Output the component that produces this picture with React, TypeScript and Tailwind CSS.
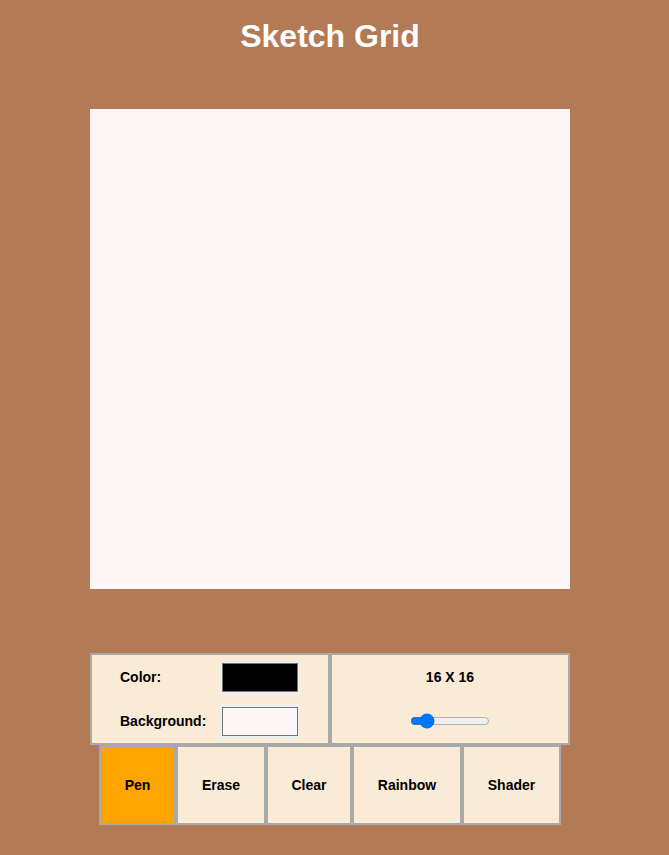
import React from "react";

const font = { fontFamily: '"Liberation Sans", Arial, sans-serif' };

function Swatch({ color }: { color: string }) {
  return (
    <div className="w-[80px] h-[35px] bg-[#efefef] flex items-center justify-center">
      <div className="w-[76px] h-[29px] border border-[#767676]" style={{ backgroundColor: color }} />
    </div>
  );
}

const buttons = [
  { label: "Pen", w: "w-[77px]", bg: "bg-[#ffa500]" },
  { label: "Erase", w: "w-[90px]", bg: "bg-[#faebd7]" },
  { label: "Clear", w: "w-[86px]", bg: "bg-[#faebd7]" },
  { label: "Rainbow", w: "w-[110px]", bg: "bg-[#faebd7]" },
  { label: "Shader", w: "w-[99px]", bg: "bg-[#faebd7]" },
];

export default function App() {
  return (
    <div className="min-h-[855px] w-full bg-[#b37a56]" style={font}>
      <div className="w-[660px] flex flex-col items-center">
        <h1 className="pt-[18px] text-[32px] leading-[37px] font-bold text-white">Sketch Grid</h1>
        <div className="mt-[54px] w-[480px] h-[480px] bg-[#fcf7f6]" />
        <div className="mt-[64px] w-[480px] flex">
          <div className="w-[240px] h-[92px] border-2 border-[#a9a9a9] bg-[#faebd7] flex flex-col justify-center gap-[9px] px-[28px]">
            <div className="flex items-center">
              <span className="w-[100px] text-[14px] font-bold text-black">Color:</span>
              <Swatch color="#000000" />
            </div>
            <div className="flex items-center">
              <span className="w-[100px] text-[14px] font-bold text-black">Background:</span>
              <Swatch color="#fcf7f6" />
            </div>
          </div>
          <div className="w-[240px] h-[92px] border-2 border-[#a9a9a9] bg-[#faebd7] flex flex-col items-center justify-center gap-[9px]">
            <div className="h-[35px] flex items-center text-[14px] font-bold text-black">16 X 16</div>
            <div className="h-[35px] flex items-center">
              <input type="range" min={2} max={100} defaultValue={16} className="w-[80px] m-0" />
            </div>
          </div>
        </div>
        <div className="flex">
          {buttons.map((b) => (
            <div
              key={b.label}
              className={`${b.w} ${b.bg} h-[80px] border-2 border-[#a9a9a9] flex items-center justify-center text-[14px] font-bold text-black`}
            >
              {b.label}
            </div>
          ))}
        </div>
      </div>
    </div>
  );
}
